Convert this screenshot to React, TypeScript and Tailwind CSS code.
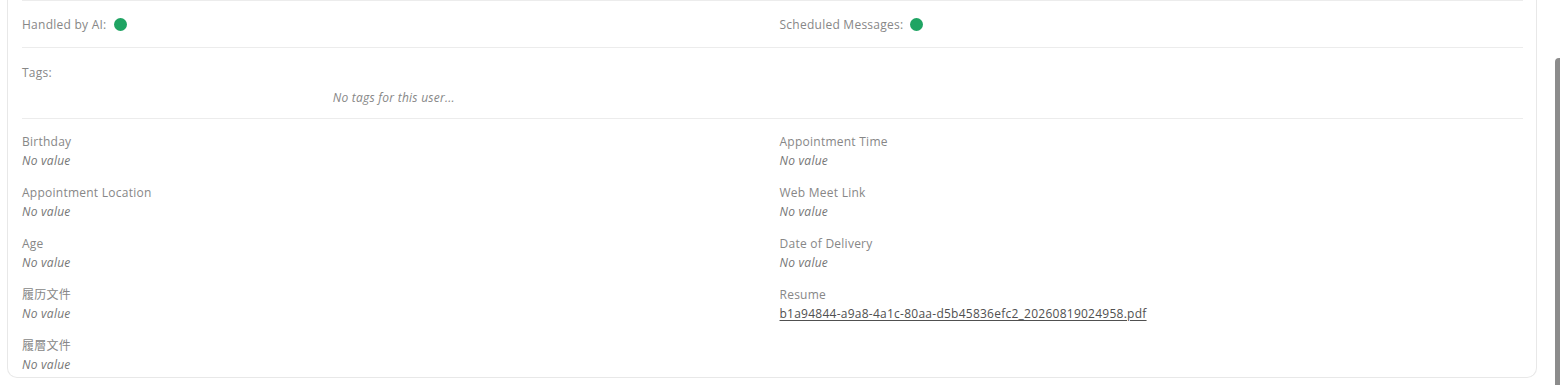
const fields: { label: string; link?: string }[][] = [
  [{ label: 'Birthday' }, { label: 'Appointment Time' }],
  [{ label: 'Appointment Location' }, { label: 'Web Meet Link' }],
  [{ label: 'Age' }, { label: 'Date of Delivery' }],
  [{ label: '履历文件' }, { label: 'Resume', link: 'b1a94844-a9a8-4a1c-80aa-d5b45836efc2_20260819024958.pdf' }],
  [{ label: '履層文件' }],
];

function Field({ label, link }: { label: string; link?: string }) {
  return (
    <div className="flex flex-col">
      <span className="text-[12px] tracking-[0.25px] leading-[19px] text-[#878787]">{label}</span>
      {link ? (
        <a className="text-[12px] tracking-[0.25px] leading-[20px] text-[#505050] underline underline-offset-2 w-fit">
          {link}
        </a>
      ) : (
        <span className="text-[12px] tracking-[0.25px] leading-[20px] italic text-[#767676]">No value</span>
      )}
    </div>
  );
}

function Dot() {
  return <span className="inline-block w-[13px] h-[13px] rounded-full bg-[#1fa463] ml-[7px]" />;
}

export default function App() {
  return (
    <div
      className="w-[1560px] h-[385px] bg-white flex overflow-hidden"
      style={{ fontFamily: '"Open Sans", "Noto Sans CJK SC", sans-serif' }}
    >
      {/* 卡片 */}
      <div className="ml-[7px] w-[1530px] h-[378px] border-x border-b border-[#e8e8e8] rounded-b-[10px] pl-[14px] pr-[13px]">
        <div className="border-t border-[#ececec]" />

        {/* 状态行 */}
        <div className="grid grid-cols-2 gap-x-[14px] h-[47px] pt-[1px] items-center border-b border-[#ececec]">
          <div className="flex items-center text-[12px] tracking-[0.25px] text-[#878787]">
            Handled by AI: <Dot />
          </div>
          <div className="flex items-center text-[12px] tracking-[0.25px] text-[#878787]">
            Scheduled Messages: <Dot />
          </div>
        </div>

        {/* 标签 */}
        <div className="grid grid-cols-2 gap-x-[14px] pt-[15px] pb-[11px] border-b border-[#ececec]">
          <div className="flex flex-col">
            <span className="text-[12px] tracking-[0.25px] leading-[19px] text-[#878787]">Tags:</span>
            <span className="mt-[6px] text-[12px] tracking-[0.25px] leading-[19px] italic text-[#878787] text-center">
              No tags for this user...
            </span>
          </div>
        </div>

        {/* 自定义字段 */}
        <div className="flex flex-col gap-[12px] pt-[13px]">
          {fields.map((row, i) => (
            <div key={i} className="grid grid-cols-2 gap-x-[14px]">
              {row.map(f => (
                <Field key={f.label} label={f.label} link={f.link} />
              ))}
            </div>
          ))}
        </div>
      </div>

      {/* 滚动条 */}
      <div className="ml-auto w-[5px] flex flex-col">
        <div className="mt-[58px] flex-1 bg-[#8c8c8c] rounded-tl-[4px]" />
      </div>
    </div>
  );
}
